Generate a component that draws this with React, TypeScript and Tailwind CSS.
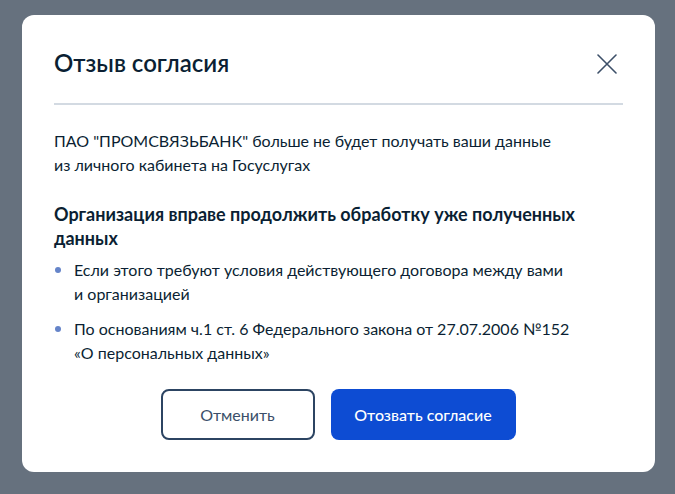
import React from "react";

export default function App() {
  return (
    <div className="w-[675px] h-[494px] bg-[#66717e] pt-[15px] pl-[22px]" style={{ fontFamily: "Lato, 'Noto Sans', sans-serif" }}>
      <div className="w-[633px] h-[457px] bg-white rounded-[12px] pt-[34px] px-[32px] pb-[32px] flex flex-col">
        <div className="flex items-start justify-between h-[28px]">
          <h1 className="text-[24px] leading-[28px] font-semibold text-[#0b1f33]">Отзыв согласия</h1>
          <button className="mr-[6px] mt-[5px]">
            <svg width="20" height="20" viewBox="0 0 20 20" fill="none">
              <path d="M1 1L19 19M19 1L1 19" stroke="#3c4f68" strokeWidth="1.6" strokeLinecap="round" />
            </svg>
          </button>
        </div>
        <div className="mt-[26px] h-[2px] bg-[#d3dae2]" />
        <p className="mt-[24px] text-[16px] leading-[24px] text-[#0b1f33]">
          ПАО "ПРОМСВЯЗЬБАНК" больше не будет получать ваши данные
          <br />
          из личного кабинета на Госуслугах
        </p>
        <h2 className="mt-[25px] text-[18px] leading-[24px] font-bold text-[#0b1f33]">
          Организация вправе продолжить обработку уже полученных
          <br />
          данных
        </h2>
        <ul className="mt-[8px] flex flex-col gap-[11px] text-[16px] leading-[24px] text-[#0b1f33]">
          <li className="flex">
            <span className="w-[6px] h-[6px] rounded-full bg-[#6584c9] mt-[9px] ml-[1px] mr-[13px] shrink-0" />
            <span>
              Если этого требуют условия действующего договора между вами
              <br />и организацией
            </span>
          </li>
          <li className="flex">
            <span className="w-[6px] h-[6px] rounded-full bg-[#6584c9] mt-[9px] ml-[1px] mr-[13px] shrink-0" />
            <span>
              По основаниям ч.1 ст. 6 Федерального закона от 27.07.2006 №152
              <br />
              «О персональных данных»
            </span>
          </li>
        </ul>
        <div className="mt-auto flex justify-center gap-[16px] pr-[1px]">
          <button className="w-[154px] h-[51px] rounded-[8px] border-2 border-[#2c4462] text-[#3b4f6a] text-[16px]">
            Отменить
          </button>
          <button className="w-[185px] h-[51px] rounded-[8px] bg-[#0d4cd3] text-white text-[16px] font-medium">
            Отозвать согласие
          </button>
        </div>
      </div>
    </div>
  );
}
